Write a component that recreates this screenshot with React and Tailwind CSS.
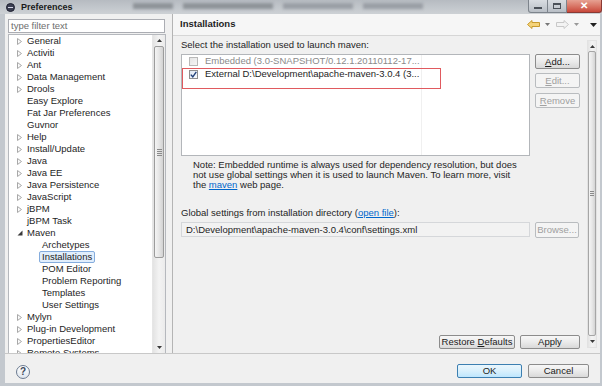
import React from 'react';

const tree = [
  ['General', 'c'], ['Activiti', 'c'], ['Ant', 'c'], ['Data Management', 'c'], ['Drools', 'c'],
  ['Easy Explore', 'n'], ['Fat Jar Preferences', 'n'], ['Guvnor', 'n'], ['Help', 'c'], ['Install/Update', 'c'],
  ['Java', 'c'], ['Java EE', 'c'], ['Java Persistence', 'c'], ['JavaScript', 'c'], ['jBPM', 'c'], ['jBPM Task', 'n'],
  ['Maven', 'e'], ['Archetypes', 'k'], ['Installations', 's'], ['POM Editor', 'k'], ['Problem Reporting', 'k'],
  ['Templates', 'k'], ['User Settings', 'k'], ['Mylyn', 'c'], ['Plug-in Development', 'c'], ['PropertiesEditor', 'c'],
  ['Remote Systems', 'c'],
];

function Collapsed() {
  return (
    <svg width="5" height="7" viewBox="0 0 5 7">
      <path d="M0.5 0.5 L4.5 3.5 L0.5 6.5 Z" fill="#fafafa" stroke="#a8a8a8" strokeWidth="1" />
    </svg>
  );
}

function Expanded() {
  return (
    <svg width="6" height="6" viewBox="0 0 6 6">
      <path d="M5.5 0.5 L5.5 5.5 L0.5 5.5 Z" fill="#3a3a3a" />
    </svg>
  );
}

function TriUp() {
  return (
    <svg width="5" height="3" viewBox="0 0 5 3">
      <path d="M0 3 L2.5 0 L5 3 Z" fill="#3a3a3a" />
    </svg>
  );
}

function TriDown({ color = '#3a3a3a', w = 5, h = 3 }) {
  return (
    <svg width={w} height={h} viewBox={`0 0 ${w} ${h}`}>
      <path d={`M0 0 L${w / 2} ${h} L${w} 0 Z`} fill={color} />
    </svg>
  );
}

function Grip() {
  return (
    <div className="flex flex-col gap-[1px]">
      <div className="w-[5px] h-[1px] bg-[#8a8a8a]" />
      <div className="w-[5px] h-[1px] bg-[#8a8a8a]" />
      <div className="w-[5px] h-[1px] bg-[#8a8a8a]" />
      <div className="w-[5px] h-[1px] bg-[#8a8a8a]" />
    </div>
  );
}

function Btn({ children, className = '', disabled = false }) {
  return (
    <div
      className={`flex items-center justify-center rounded-[2px] border leading-none ${
        disabled
          ? 'border-[#b9bcbf] bg-[#f4f4f4] text-[#a0a0a0]'
          : 'border-[#8c8c8c] bg-gradient-to-b from-[#f7f7f7] via-[#ebebeb] to-[#d9d9d9] text-[#1a1a1a]'
      } ${className}`}
    >
      {children}
    </div>
  );
}

export default function App() {
  return (
    <div className="w-[602px] h-[386px] overflow-hidden flex flex-col bg-[#c3c8ce] font-['Liberation_Sans',Arial,sans-serif] text-[9.5px] text-[#1e1e1e]">
      {/* Title bar */}
      <div className="h-[14px] flex items-start bg-gradient-to-b from-[#b6bbc1] to-[#cdd1d5]">
        <div className="ml-[6px] mt-[3px] w-[9px] h-[9px] rounded-full bg-[#3b3f52] border border-[#1e2030] flex items-center justify-center">
          <div className="w-[5px] h-[1px] bg-[#d8d8e8]" />
        </div>
        <div className="ml-[6px] mt-[2px] text-[9px] leading-[11px] font-semibold text-[#1a1a1a]">Preferences</div>
        <div className="ml-[60px] mt-[3px] flex gap-[10px] blur-[1.5px]">
          <div className="w-[40px] h-[6px] bg-[#8e9399]" />
          <div className="w-[90px] h-[6px] bg-[#8e9399]" />
          <div className="w-[70px] h-[6px] bg-[#9a9fa5]" />
          <div className="w-[60px] h-[6px] bg-[#9a9fa5]" />
        </div>
        <div className="ml-auto flex">
          <div className="w-[20px] h-[13px] rounded-bl-[3px] border border-t-0 border-[#7d848c] bg-gradient-to-b from-[#d9dde2] to-[#b9bfc6] flex items-center justify-center">
            <div className="w-[8px] h-[2px] bg-[#4a5058] mt-[4px]" />
          </div>
          <div className="w-[19px] h-[13px] border border-l-0 border-t-0 border-[#7d848c] bg-gradient-to-b from-[#d9dde2] to-[#b9bfc6] flex items-center justify-center">
            <div className="w-[8px] h-[6px] border border-t-2 border-[#4a5058]" />
          </div>
          <div className="w-[35px] h-[13px] rounded-br-[3px] border border-l-0 border-t-0 border-[#8a3a34] bg-gradient-to-b from-[#e6a192] to-[#c8473a] flex items-center justify-center text-white text-[10px] font-bold leading-none">
            ✕
          </div>
        </div>
      </div>

      {/* Client */}
      <div className="flex-1 flex pl-[5px] pr-[4px] pb-[3px]">
        <div className="flex-1 flex flex-col bg-[#f0f0f0]">
          <div className="h-[339px] flex">
            {/* Left pane */}
            <div className="w-[167px] flex flex-col pt-[5px] pl-[3px]">
              <div className="w-[157px] h-[14px] border border-[#abadb3] bg-white flex items-center pl-[2px] text-[#6d6d6d] leading-none">
                type filter text
              </div>
              <div className="mt-[1px] w-[158px] flex-1 border border-b-0 border-[#b5b8bd] bg-white flex overflow-hidden">
                <div className="w-[143px] flex flex-col overflow-hidden">
                  {tree.map(([label, kind]) => {
                    if (kind === 'k' || kind === 's') {
                      return (
                        <div key={label} className="h-[12px] shrink-0 flex items-center pl-[30px] leading-[10px]">
                          <span
                            className={
                              kind === 's'
                                ? 'px-[2px] h-[12px] flex items-center border border-[#84acdd] bg-[#e1eefc] rounded-[2px]'
                                : 'px-[2px] h-[12px] flex items-center border border-transparent'
                            }
                          >
                            {label}
                          </span>
                        </div>
                      );
                    }
                    return (
                      <div key={label} className="h-[12px] shrink-0 flex items-center pl-[7px] leading-[12px]">
                        <span className="w-[7px] h-[12px] flex items-center justify-center">
                          {kind === 'c' ? <Collapsed /> : kind === 'e' ? <Expanded /> : null}
                        </span>
                        <span className="ml-[4px] whitespace-nowrap">{label}</span>
                      </div>
                    );
                  })}
                </div>
                {/* tree scrollbar */}
                <div className="w-[13px] flex flex-col bg-gradient-to-r from-[#e3e3e3] via-[#f3f3f3] to-[#ebebeb] border-l border-[#e6e6e6]">
                  <div className="h-[10px] flex items-center justify-center">
                    <TriUp />
                  </div>
                  <div className="h-[212px] mx-[1px] mt-[1px] rounded-[2px] border border-[#9c9c9c] bg-gradient-to-r from-[#f4f4f4] via-[#e6e6e6] to-[#d2d2d2] flex items-center justify-center">
                    <Grip />
                  </div>
                  <div className="flex-1" />
                  <div className="h-[11px] flex items-center justify-center">
                    <TriDown />
                  </div>
                </div>
              </div>
            </div>

            {/* sash */}
            <div className="w-[1px] bg-[#b4b4b4] mx-[0px] ml-[0px]" />

            {/* Right pane */}
            <div className="flex-1 flex flex-col">
              <div className="h-[22px] flex items-center pl-[7px] bg-[#f6f6f6] border-b border-[#d6d6d6]">
                <span className="font-bold">Installations</span>
                <div className="ml-auto flex items-center pr-[3px]">
                  <svg width="13" height="9" viewBox="0 0 13 9">
                    <path d="M0.5 4.5 L5 0.5 L5 2.5 L12.5 2.5 L12.5 6.5 L5 6.5 L5 8.5 Z" fill="#f4d37a" stroke="#c79a2e" strokeWidth="1" />
                  </svg>
                  <span className="ml-[5px]"><TriDown color="#777" /></span>
                  <svg className="ml-[6px]" width="13" height="9" viewBox="0 0 13 9">
                    <path d="M12.5 4.5 L8 0.5 L8 2.5 L0.5 2.5 L0.5 6.5 L8 6.5 L8 8.5 Z" fill="#f3f3f3" stroke="#c8c8c8" strokeWidth="1" />
                  </svg>
                  <span className="ml-[5px]"><TriDown color="#999" /></span>
                  <span className="ml-[11px]"><TriDown color="#222" w={7} h={4} /></span>
                </div>
              </div>

              <div className="flex-1 flex">
                <div className="flex-1 flex flex-col pl-[8px] pr-[7px]">
                  <div className="mt-[3px] h-[12px] leading-[12px]">Select the installation used to launch maven:</div>
                  <div className="mt-[3px] flex">
                    <div className="relative w-[349px] h-[102px] border border-[#b3b6ba] bg-white flex">
                      <div className="w-[240px] border-r border-[#f0f0f0] flex flex-col">
                        <div className="h-[13px] flex items-center pl-[7px]">
                          <div className="w-[9px] h-[9px] border border-[#b8b8b8] bg-gradient-to-br from-[#e4e4e4] to-[#f6f6f6]" />
                          <span className="ml-[7px] text-[#8a8a8a] whitespace-nowrap">Embedded (3.0-SNAPSHOT/0.12.1.20110112-17...</span>
                        </div>
                        <div className="h-[13px] flex items-center pl-[7px]">
                          <div className="w-[9px] h-[9px] border border-[#8e8f8f] bg-gradient-to-br from-[#dfe8f3] to-[#f7fbff] flex items-center justify-center">
                            <svg width="7" height="7" viewBox="0 0 7 7">
                              <path d="M0.8 3.6 L2.8 5.8 L6.3 0.8" fill="none" stroke="#23427a" strokeWidth="1.4" />
                            </svg>
                          </div>
                          <span className="ml-[7px] whitespace-nowrap">External D:\Development\apache-maven-3.0.4 (3...</span>
                        </div>
                      </div>
                      <div className="absolute left-[0px] top-[13px] w-[259px] h-[21px] border border-[#e05a5f]" />
                    </div>
                    <div className="ml-[5px] w-[45px] flex flex-col">
                      <Btn className="h-[15px]"><span><span className="underline">A</span>dd...</span></Btn>
                      <Btn className="h-[15px] mt-[4px]" disabled><span><span className="underline">E</span>dit...</span></Btn>
                      <Btn className="h-[15px] mt-[5px]" disabled><span><span className="underline">R</span>emove</span></Btn>
                    </div>
                  </div>
                  <div className="mt-[4px] pl-[12px] leading-[10px]">
                    <div>Note: Embedded runtime is always used for dependency resolution, but does</div>
                    <div>not use global settings when it is used to launch Maven. To learn more, visit</div>
                    <div>
                      the <span className="text-[#0066cc] underline">maven</span> web page.
                    </div>
                  </div>
                  <div className="mt-[17px] h-[12px] leading-[12px]">
                    Global settings from installation directory (<span className="text-[#0066cc] underline">open file</span>):
                  </div>
                  <div className="mt-[3px] flex items-start">
                    <div className="w-[349px] h-[15px] border border-[#d5d7da] bg-[#f2f2f2] flex items-center pl-[4px] leading-none">
                      D:\Development\apache-maven-3.0.4\conf\settings.xml
                    </div>
                    <Btn className="ml-[5px] w-[44px] h-[16px]" disabled>Browse...</Btn>
                  </div>
                  <div className="flex-1" />
                  <div className="flex justify-end mb-[4px]">
                    <Btn className="w-[76px] h-[14px]">
                      <span>Restore <span className="underline">D</span>efaults</span>
                    </Btn>
                    <Btn className="ml-[5px] w-[60px] h-[14px]">Apply</Btn>
                  </div>
                </div>
                {/* right scrollbar */}
                <div className="w-[10px] mt-[4px] mb-[5px] mr-[3px] flex flex-col bg-gradient-to-r from-[#e3e3e3] via-[#f3f3f3] to-[#ebebeb] border border-[#e2e2e2]">
                  <div className="h-[10px] flex items-center justify-center">
                    <TriUp />
                  </div>
                  <div className="flex-1 rounded-[2px] border border-[#a6a6a6] bg-gradient-to-r from-[#f4f4f4] via-[#e8e8e8] to-[#d4d4d4] flex items-center justify-center">
                    <div className="flex flex-col gap-[1px]">
                      <div className="w-[4px] h-[1px] bg-[#8a8a8a]" />
                      <div className="w-[4px] h-[1px] bg-[#8a8a8a]" />
                      <div className="w-[4px] h-[1px] bg-[#8a8a8a]" />
                    </div>
                  </div>
                  <div className="h-[11px] flex items-center justify-center">
                    <TriDown />
                  </div>
                </div>
              </div>
            </div>
          </div>

          {/* bottom bar */}
          <div className="h-[30px] border-t border-[#c8c8c8] flex items-start pt-[10px] pl-[11px] pr-[11px]">
            <div className="mt-[1px] w-[14px] h-[14px] rounded-full border border-[#6b7a90] bg-gradient-to-b from-[#ffffff] to-[#dfe6ee] flex items-center justify-center text-[10px] font-bold leading-none text-[#3c4658]">
              ?
            </div>
            <div className="ml-auto flex">
              <div className="w-[65px] h-[14px] rounded-[2px] border border-[#3c7fb1] bg-gradient-to-b from-[#eaf6fd] via-[#d9f0fc] to-[#bee6fd] flex items-center justify-center leading-none">
                OK
              </div>
              <Btn className="ml-[6px] w-[61px] h-[14px]">Cancel</Btn>
            </div>
          </div>
        </div>
      </div>
    </div>
  );
}
